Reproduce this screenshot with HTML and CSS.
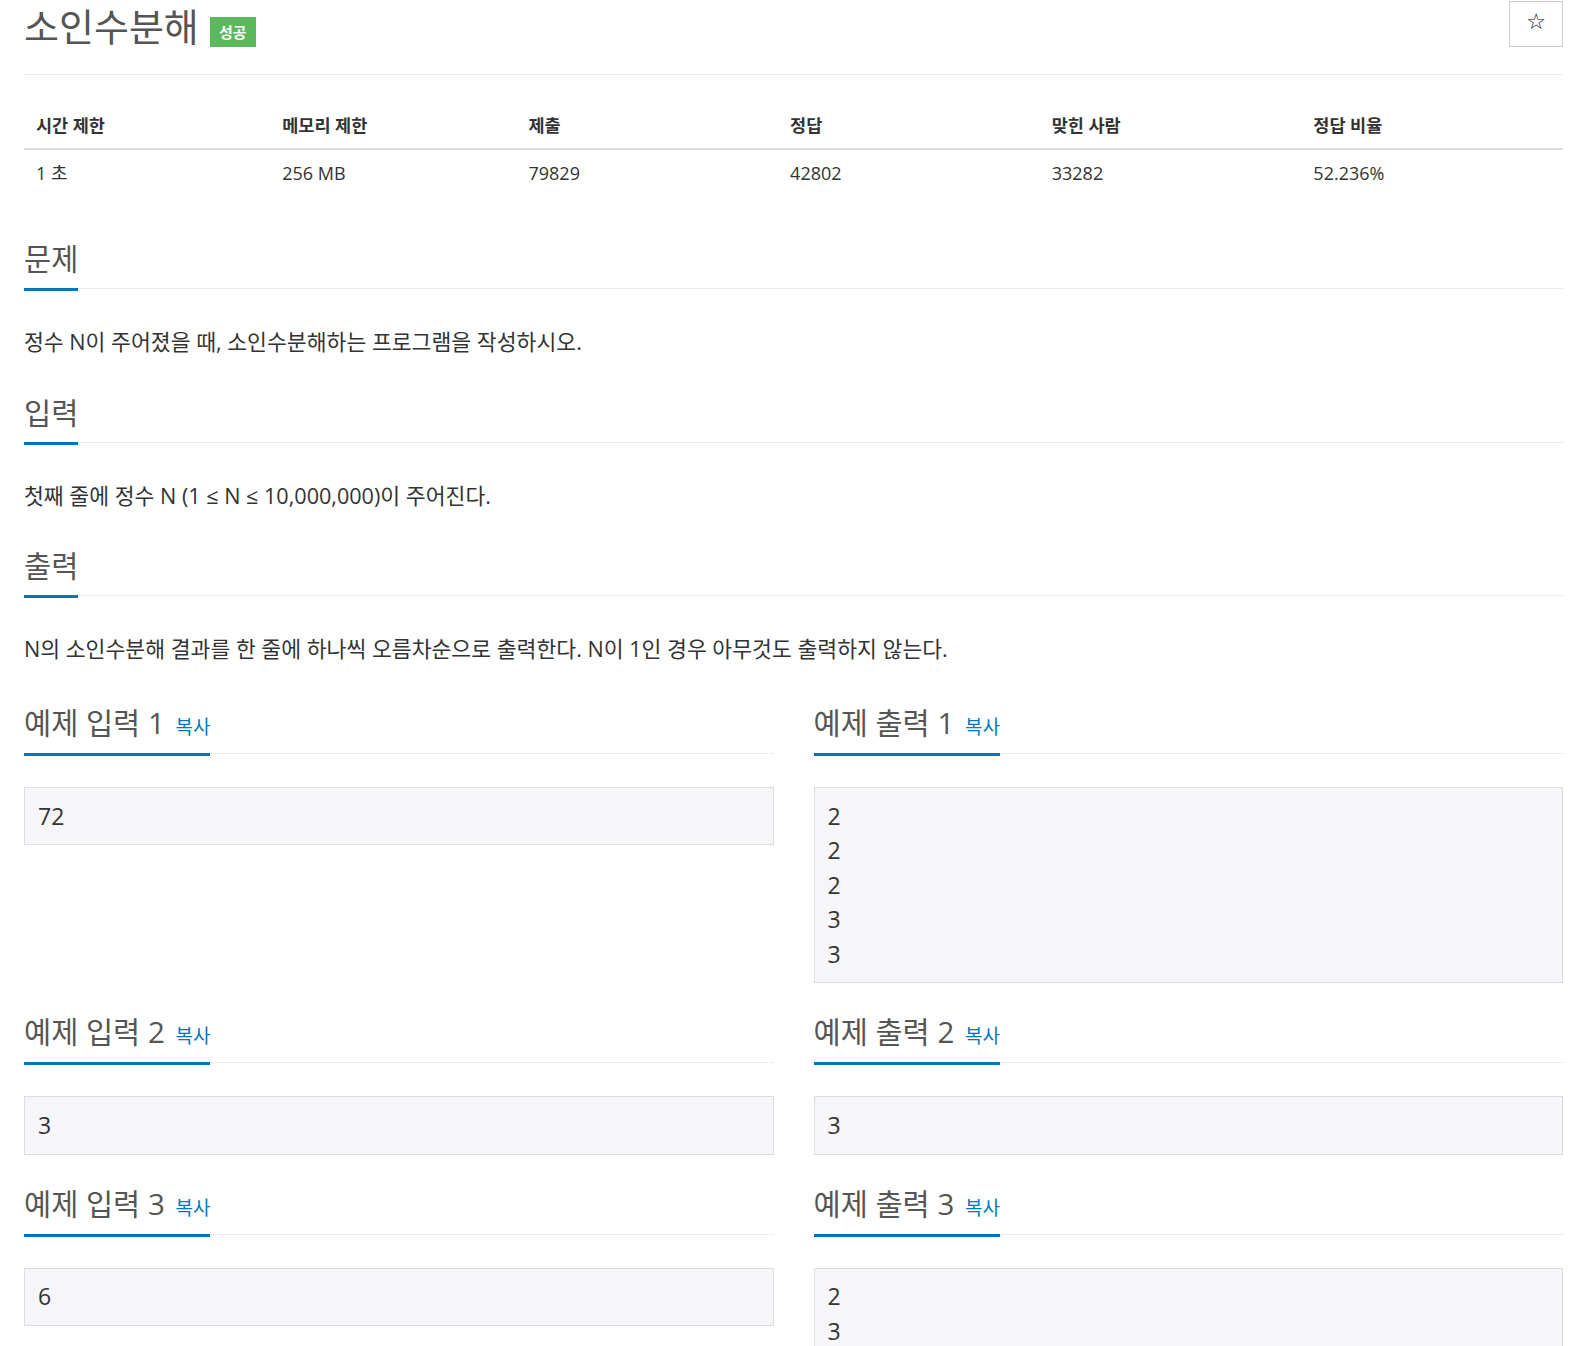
FILE: index.html
```html
<!DOCTYPE html>
<html lang="ko">
<head>
<meta charset="utf-8">
<title>소인수분해</title>
<link rel="stylesheet" href="styles.css">
</head>
<body>
<div class="page">
  <div class="title-row">
    <h1 class="title"><span class="title-text">소인수분해</span><span class="badge">성공</span></h1>
    <button class="star" type="button">☆</button>
  </div>
  <hr class="rule">

  <table class="info">
    <thead>
      <tr><th class="c16">시간 제한</th><th class="c16">메모리 제한</th><th class="c17">제출</th><th class="c17">정답</th><th class="c17">맞힌 사람</th><th class="c17">정답 비율</th></tr>
    </thead>
    <tbody>
      <tr><td>1 초</td><td>256 MB</td><td>79829</td><td>42802</td><td>33282</td><td>52.236%</td></tr>
    </tbody>
  </table>

  <section class="sec">
    <div class="headline"><h2>문제</h2></div>
    <p class="desc">정수 N이 주어졌을 때, 소인수분해하는 프로그램을 작성하시오.</p>
  </section>
  <section class="sec">
    <div class="headline"><h2>입력</h2></div>
    <p class="desc">첫째 줄에 정수 N (1 ≤ N ≤ 10,000,000)이 주어진다.</p>
  </section>
  <section class="sec">
    <div class="headline"><h2>출력</h2></div>
    <p class="desc">N의 소인수분해 결과를 한 줄에 하나씩 오름차순으로 출력한다. N이 1인 경우 아무것도 출력하지 않는다.</p>
  </section>

  <div class="samples">
    <div class="sample">
      <div class="headline"><h2>예제 입력 1 <a class="copy">복사</a></h2></div>
      <pre class="box">72</pre>
    </div>
    <div class="sample">
      <div class="headline"><h2>예제 출력 1 <a class="copy">복사</a></h2></div>
      <pre class="box">2
2
2
3
3</pre>
    </div>
    <div class="sample">
      <div class="headline"><h2>예제 입력 2 <a class="copy">복사</a></h2></div>
      <pre class="box">3</pre>
    </div>
    <div class="sample">
      <div class="headline"><h2>예제 출력 2 <a class="copy">복사</a></h2></div>
      <pre class="box">3</pre>
    </div>
    <div class="sample">
      <div class="headline"><h2>예제 입력 3 <a class="copy">복사</a></h2></div>
      <pre class="box">6</pre>
    </div>
    <div class="sample">
      <div class="headline"><h2>예제 출력 3 <a class="copy">복사</a></h2></div>
      <pre class="box">2
3</pre>
    </div>
  </div>
</div>
</body>
</html>
```
FILE: styles.css
```css
html, body {
  margin: 0;
  padding: 0;
  background: #fff;
}
body {
  font-family: "Open Sans", "Noto Sans CJK KR", sans-serif;
  color: #333;
  font-size: 21.6px;
}
.page {
  padding: 0 10px 0 24px;
}
.title-row {
  display: flex;
  justify-content: space-between;
  align-items: flex-start;
  height: 48px;
}
.title {
  margin: 0;
  padding-top: 4px;
  font-weight: 400;
  font-size: 38px;
  line-height: 44px;
  height: 44px;
  color: #555;
  display: flex;
  align-items: flex-start;
}
.badge {
  display: inline-block;
  margin-left: 11px;
  margin-top: 13px;
  background: #5cb85c;
  color: #fff;
  font-size: 15px;
  font-weight: 700;
  line-height: 30px;
  height: 30px;
  padding: 0 8px;
  width: 30px;
  text-align: center;
}
.star {
  margin-top: 1px;
  width: 54px;
  height: 46px;
  background: #fff;
  border: 1px solid #ccc;
  font-size: 22px;
  color: #111;
  padding: 0 0 4px;
  font-family: "DejaVu Sans", sans-serif;
  line-height: 1;
}
.rule {
  border: 0;
  border-top: 1px solid #eee;
  margin: 26px 0 0;
}
.info {
  width: 100%;
  border-collapse: collapse;
  margin-top: 27px;
}
.info th, .info td {
  text-align: left;
  padding: 12px 12px;
  line-height: 22px;
  height: 22px;
}
.info th {
  font-size: 17.5px;
  font-weight: 700;
  border-bottom: 2px solid #ddd;
  padding-top: 12px;
  color: #333;
}
.info td {
  font-size: 18px;
  padding-top: 12px;
}
.c16 { width: 16%; }
.c17 { width: 17%; }
.sec {
  margin-top: 47px;
}
.sec + .sec {
  margin-top: 0;
}
.headline {
  display: flex;
  border-bottom: 1px dotted #ddd;
}
.headline h2 {
  margin: 0 0 -3px;
  font-weight: 400;
  font-size: 29.5px;
  line-height: 32px;
  height: 32px;
  color: #555;
  padding-bottom: 13px;
  border-bottom: 3px solid #0076c0;
  white-space: nowrap;
}
.sample .headline h2 {
  padding-bottom: 14px;
}
.desc {
  margin: 39px 0 0;
  line-height: 28px;
  height: 28px;
  color: #333;
  padding-bottom: 40.6px;
}
.copy {
  font-size: 19px;
  line-height: 1;
  color: #0076c0;
  margin-left: 3px;
}
.samples {
  display: grid;
  grid-template-columns: 1fr 1fr;
  column-gap: 40px;
  margin-top: 3px;
}
.sample {
  margin-bottom: 33px;
}
.box {
  margin: 33px 0 0;
  background: #f6f6f8;
  border: 1px solid #dcdce3;
  padding: 10.8px 13px;
  font-family: "Open Sans", "Noto Sans CJK KR", sans-serif;
  font-size: 23px;
  line-height: 34.6px;
  color: #333;
  white-space: pre;
}
```
